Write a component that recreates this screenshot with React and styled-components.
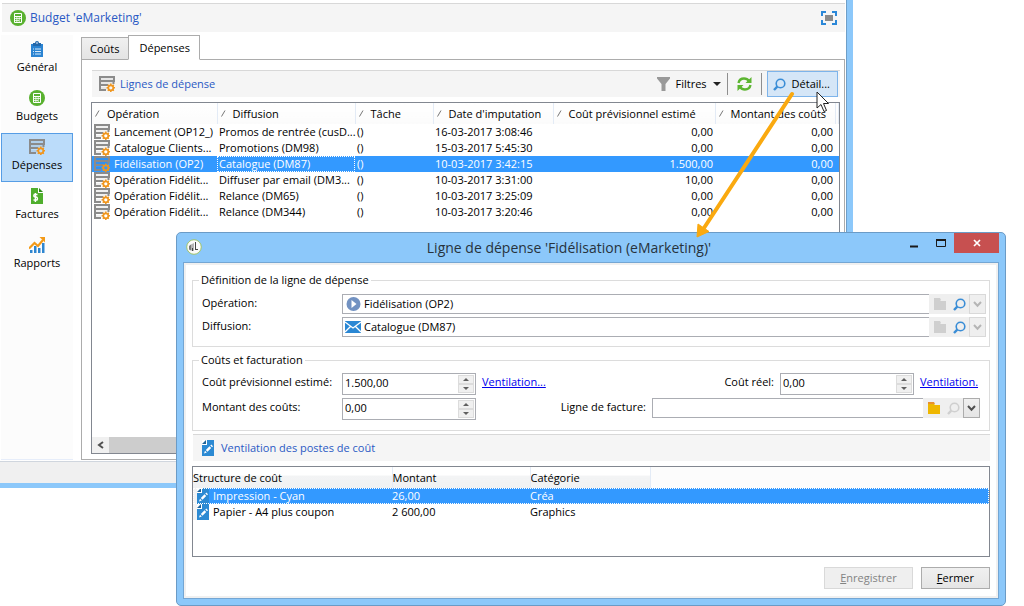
import React from 'react'
import styled, { createGlobalStyle, css } from 'styled-components'

const GlobalStyle = createGlobalStyle`
    * {
        box-sizing: border-box;
    }
    body {
        margin: 0;
        background: #fff;
        color: #000;
        font-family: 'Open Sans', 'Noto Sans', sans-serif;
        font-size: 11px;
        line-height: 16px;
    }
    button, input {
        font: inherit;
        color: inherit;
        margin: 0;
    }
    svg {
        display: block;
        flex: none;
    }
`;

const Desktop = styled.div`
    position: relative;
    min-height: 100vh;
    overflow: hidden;
`;

/* ---------- main window ---------- */

const MainWindow = styled.div`
    display: flex;
    flex-direction: column;
    height: calc(100vh - 118px);
    margin-right: 171px;
    padding-top: 3px;
    border-right: 6px solid #8cc8fa;
    border-bottom: 5px solid #8cc8fa;
    box-shadow: inset -1px 0 0 #6f9fc8, inset 0 -1px 0 #6f9fc8;
`;

const Header = styled.header`
    display: flex;
    align-items: center;
    gap: 4px;
    height: 29px;
    margin: 0 2px;
    padding: 0 8px;
    border-top: 1px solid #d8d8d8;
    background: #f5f5f5;
`;

const HeaderTitle = styled.h1`
    flex: 1;
    margin: 0;
    font-size: 12px;
    font-weight: 400;
    color: #2a59c4;
`;

const Body = styled.div`
    flex: 1;
    display: flex;
    gap: 8px;
    min-height: 0;
    margin: 3px 2px 1px 1px;
`;

const Sidebar = styled.nav`
    flex: none;
    width: 72px;
    background: #fcfcfc;
    border-bottom: 1px solid #e6edfa;
`;

const NavItem = styled.button`
    display: flex;
    flex-direction: column;
    align-items: center;
    gap: 2px;
    width: 100%;
    height: 49px;
    padding: 5px 0 0;
    border: 1px solid transparent;
    background: transparent;
    ${({ $active }) => $active && css`
        border-color: #569de5;
        background: #bbdcfa;
    `}
`;

const Content = styled.main`
    flex: 1;
    display: flex;
    flex-direction: column;
    min-width: 0;
`;

const Tabs = styled.div`
    display: flex;
    align-items: flex-end;
    height: 25px;
    margin-bottom: -1px;
`;

const Tab = styled.button`
    position: relative;
    height: 23px;
    padding: 0 9px 0 8px;
    border: 1px solid #acacac;
    border-right: 0;
    background: linear-gradient(#f0f0f0, #e4e4e4);
    ${({ $active }) => $active && css`
        height: 25px;
        padding: 0 9px 0 10px;
        border-right: 1px solid #acacac;
        border-bottom-color: #fff;
        background: #fff;
    `}
`;

const Panel = styled.section`
    flex: 1;
    display: flex;
    flex-direction: column;
    gap: 5px;
    min-height: 0;
    padding: 10px 4px 5px 9px;
    border: 1px solid #acacac;
`;

const Toolbar = styled.div`
    display: flex;
    align-items: center;
    gap: ${({ $flush }) => ($flush ? '7px' : '5px')};
    height: 27px;
    margin: ${({ $flush }) => ($flush ? '3px 0 0 1px' : '0 0 0 1px')};
    padding: ${({ $flush }) => ($flush ? '0 9px' : '0 2px 0 7px')};
    border-top: 1px solid #d8d8d8;
    background: #f5f5f5;
`;

const ToolbarTitle = styled.h2`
    flex: 1;
    margin: 0;
    font-size: 11px;
    font-weight: 400;
    color: #2a59c4;
`;

const ToolButton = styled.button`
    display: flex;
    align-items: center;
    gap: 6px;
    height: 26px;
    padding: 0 3px;
    border: 1px solid transparent;
    background: transparent;
    ${({ $drop }) => $drop && css`
        padding: 0;
    `}
    ${({ $hot }) => $hot && css`
        padding: 0 7px 0 5px;
        border-color: #7eb4ea;
        background: #d5e6f7;
    `}
`;

const Separator = styled.span`
    width: 1px;
    height: 22px;
    background: #8e8e8e;
`;

const ListBox = styled.div`
    flex: ${({ $tall }) => ($tall ? '1' : 'none')};
    display: flex;
    flex-direction: column;
    justify-content: space-between;
    height: ${({ $tall }) => ($tall ? 'auto' : '91px')};
    margin-top: ${({ $tall }) => ($tall ? '0' : '5px')};
    border: 1px solid #828790;
    overflow: hidden;
`;

const Table = styled.table`
    width: 100%;
    table-layout: fixed;
    border-collapse: collapse;
`;

const Col = styled.col`
    width: ${({ $width }) => $width};
`;

const Th = styled.th`
    height: 21px;
    padding: 0 0 0 3px;
    overflow: hidden;
    border-right: 1px solid #e3ebf6;
    background: linear-gradient(#fff, #fbfbfb);
    font-weight: 400;
    text-align: left;
    white-space: nowrap;
    svg {
        display: inline-block;
        margin-right: 7px;
        vertical-align: 1px;
    }
`;

const CostTh = styled(Th)`
    padding: 0;
    background: ${({ $empty }) => ($empty ? '#fcfcfc' : 'linear-gradient(#fff 40%, #f3f4f5 41%, #f0f1f2)')};
    border-right-color: ${({ $empty }) => ($empty ? 'transparent' : '#e3ebf6')};
`;

const Row = styled.tr`
    height: 16px;
    ${({ $selected }) => $selected && css`
        background: #3399ff;
        color: #fff;
    `}
`;

const Td = styled.td`
    height: 16px;
    padding: 0 2px;
    white-space: nowrap;
    text-align: ${({ $right }) => ($right ? 'right' : 'left')};
    outline: ${({ $focus }) => ($focus ? '1px dotted #fff' : 'none')};
    outline-offset: -1px;
`;

const IconCell = styled.div`
    display: flex;
    align-items: center;
    gap: 4px;
    height: 16px;
`;

const CostRow = styled(Row)`
    outline: ${({ $selected }) => ($selected ? '1px dotted #fff' : 'none')};
    outline-offset: -1px;
`;

const CostTd = styled(Td)`
    padding: 0;
    ${({ $first }) => $first && css`
        padding-left: 4px;
        background: linear-gradient(to right, #f3f3f3 16px, transparent 16px);
    `}
`;

const ScrollBar = styled.div`
    display: flex;
    height: 16px;
    background: #f0f0f0;
`;

const ScrollArrow = styled.button`
    display: grid;
    place-items: center;
    width: 17px;
    padding: 0;
    border: 0;
    background: #f0f0f0;
`;

const ScrollThumb = styled.div`
    width: 60%;
    background: #cdcdcd;
`;

const StatusBar = styled.footer`
    height: 22px;
    border-top: 1px solid #d0d6de;
    background: #f0f0f0;
`;

/* ---------- dialog ---------- */

const Dialog = styled.div`
    position: absolute;
    top: 232px;
    right: 18px;
    bottom: 0;
    left: 176px;
    display: flex;
    flex-direction: column;
    padding: 0 6px 6px;
    border: 1px solid #6b9bc6;
    border-radius: 5px;
    background: #8cc8fa;
`;

const TitleBar = styled.div`
    display: flex;
    height: 29px;
    padding-left: 3px;
`;

const AppIcon = styled.div`
    padding-top: 6px;
`;

const DialogTitle = styled.h2`
    flex: 1;
    margin: 0;
    padding-left: 36px;
    font-size: 14px;
    font-weight: 400;
    line-height: 30px;
    text-align: center;
    color: #27333d;
`;

const WindowButton = styled.button`
    display: grid;
    place-items: center;
    width: ${({ $close }) => ($close ? '45px' : '27px')};
    height: 20px;
    padding: 0;
    border: 0;
    background: ${({ $close }) => ($close ? '#c75050' : 'transparent')};
`;

const Client = styled.form`
    flex: 1;
    display: flex;
    flex-direction: column;
    padding: 7px 8px;
    border: 1px solid #74a6d3;
    background: #fff;
    box-shadow: inset 0 0 0 2px #f0f0f0;
`;

const Group = styled.fieldset`
    display: flex;
    flex-direction: column;
    gap: 3px;
    min-width: 0;
    margin: 2px 0 0;
    padding: ${({ $wide }) => ($wide ? '6px 3px 9px 9px' : '5px 9px 10px')};
    border: 1px solid #dcdcdc;
    & + & {
        margin-top: 5px;
    }
`;

const Legend = styled.legend`
    margin-left: -3px;
    padding: 0 2px;
`;

const FormRow = styled.div`
    display: flex;
    align-items: flex-start;
`;

const Label = styled.label`
    width: ${({ $auto }) => ($auto ? 'auto' : '140px')};
    margin-right: ${({ $auto }) => ($auto ? '6px' : '0')};
    padding-top: 1px;
`;

const Spacer = styled.div`
    flex: 1;
`;

const LinkField = styled.div`
    flex: ${({ $short }) => ($short ? 'none' : '1')};
    display: flex;
    width: ${({ $short }) => ($short ? '328px' : 'auto')};
    height: 20px;
`;

const FieldBox = styled.div`
    flex: 1;
    display: flex;
    align-items: center;
    gap: 3px;
    min-width: 0;
    padding-left: 2px;
    border: 1px solid #abadb3;
    border-right: 0;
`;

const TextInput = styled.input`
    flex: 1;
    min-width: 0;
    height: 16px;
    padding: 0;
    border: 0;
    outline: 0;
    background: transparent;
`;

const FieldButton = styled.button`
    display: grid;
    place-items: center;
    width: ${({ $arrow }) => ($arrow ? '17px' : '20px')};
    padding: 0;
    border: ${({ $arrow }) => ($arrow ? '1px solid #d9d9d9' : '0')};
    background: #efefef;
    ${({ $enabled }) => $enabled && css`
        border-color: #acacac;
        background: linear-gradient(#f0f0f0, #e5e5e5);
    `}
`;

const Spin = styled.div`
    display: flex;
    width: 134px;
    height: 22px;
    padding: 1px 1px 1px 2px;
    border: 1px solid #abadb3;
`;

const SpinButtons = styled.div`
    display: flex;
    flex-direction: column;
    width: 16px;
`;

const SpinButton = styled.button`
    flex: 1;
    display: grid;
    place-items: center;
    padding: 0;
    border: 1px solid #dcdcdc;
    background: #f0f0f0;
`;

const Link = styled.a`
    min-width: 60px;
    margin-left: 6px;
    padding-top: 1px;
    color: #0000ee;
    text-decoration: underline;
`;

const Actions = styled.div`
    display: flex;
    justify-content: flex-end;
    gap: 8px;
    margin-top: 10px;
`;

const ActionButton = styled.button`
    min-width: 69px;
    height: 22px;
    padding: 0 15px;
    border: 1px solid #acacac;
    background: linear-gradient(#f0f0f0, #e5e5e5);
    &:disabled {
        border-color: #d9d9d9;
        background: #efefef;
        color: #838383;
    }
`;

const Pointer = styled.svg`
    position: absolute;
    top: 86px;
    right: 190px;
    pointer-events: none;
`;

/* ---------- icons ---------- */

const CalcIcon = () => (
    <svg width="16" height="16" viewBox="0 0 16 16">
        <circle cx="8" cy="8" r="8" fill="#59b12f" />
        <rect x="4" y="3" width="8" height="10" rx="1" fill="#fff" />
        <path d="M5 4h6v2H5zM5 7h1.5v1.300H5zM7.300 7h1.500v1.300H7.300zM9.500 7H11v1.300H9.500zM5 9h1.500v1.300H5zM7.300 9h1.500v1.300H7.300zM9.500 9H11v3H9.500zM5 11h1.500v1H5zM7.300 11h1.500v1H7.300z" fill="#59b12f" />
    </svg>
);

const ClipboardIcon = () => (
    <svg width="16" height="16" viewBox="0 0 16 16">
        <path d="M2 3h12v13H2z" fill="#2b84d2" />
        <path d="M4 2h2a2 2 0 0 1 4 0h2v3H4z" fill="#2368aa" />
        <circle cx="8" cy="2" r=".8" fill="#fff" />
        <path d="M4 8h1M6 8h6M4 10.500h1M6 10.500h6M4 13h1M6 13h6" stroke="#d6eafb" />
    </svg>
);

const ExpenseIcon = () => (
    <svg width="16" height="16" viewBox="0 0 16 16">
        <path d="M2 2h12v6.500H2zM2 11h6v2.500H2z" fill="#000" fillOpacity=".06" />
        <path d="M1 1h14v4H1zM1 5v9h6M1 9h8M14.500 5v3" fill="none" stroke="#8b8b8b" strokeWidth="2" />
        <g fill="none" stroke="#f0961e">
            <path d="M11.800 7.500v2M11.800 14v2M7.600 11.800h2M14 11.800h2M8.800 8.800l1.400 1.400M13.400 13.400l1.400 1.400M14.800 8.800l-1.400 1.400M10.200 13.400l-1.400 1.400" strokeWidth="1.500" />
            <circle cx="11.800" cy="11.800" r="2.500" strokeWidth="1.700" />
        </g>
    </svg>
);

const InvoiceIcon = () => (
    <svg width="16" height="16" viewBox="0 0 16 16">
        <path d="M2 0h7v5h5v11H2z" fill="#4fae2d" />
        <path d="M10 0l4 4h-4z" fill="#2f8a1a" />
        <path d="M8.500 6.500H5.200Q4 8.500 6.200 9h.8q2.300.7 1 3H4.500M6.400 5v9" fill="none" stroke="#fff" strokeWidth="1.400" />
    </svg>
);

const ReportIcon = () => (
    <svg width="16" height="16" viewBox="0 0 16 16">
        <path d="M1 13h2.500v3H1zM5 9h2.500v7H5zM9 11h2.500v5H9zM13 6h2.500v10H13z" fill="#2f86d0" />
        <path d="M0 11.500l5.500-5.500 3.500 3 5-6" fill="none" stroke="#f39a18" strokeWidth="2.200" />
        <path d="M10.500 0H16v5.500z" fill="#f39a18" />
    </svg>
);

const FullscreenIcon = () => (
    <svg width="16" height="14" viewBox="0 0 16 14">
        <path d="M1 5V1h4M11 1h4v4M15 9v4h-4M5 13H1V9" fill="none" stroke="#2b88d8" strokeWidth="2" />
        <path d="M4 4h8v6H4z" fill="#8a8a8a" />
    </svg>
);

const FilterIcon = () => (
    <svg width="13" height="14" viewBox="0 0 13 14">
        <path d="M0 0h13v1.500L8.500 7v7h-4V7L0 1.500z" fill="#999" />
    </svg>
);

const RefreshIcon = () => (
    <svg width="15" height="14" viewBox="0 0 15 14">
        <path d="M1.500 6q1-4.500 5.500-4.500 3.300 0 5 2.500M13.500 8q-1 4.500-5.500 4.500-3.300 0-5-2.500" fill="none" stroke="#5cb531" strokeWidth="2.400" />
        <path d="M14.500 0v6H8.500zM.5 14V8h6z" fill="#5cb531" />
    </svg>
);

const SearchIcon = ({ color = '#3a8dd6' }) => (
    <svg width="13" height="13" viewBox="0 0 13 13">
        <circle cx="7.500" cy="5.500" r="4.300" fill="none" stroke={color} strokeWidth="1.600" />
        <path d="M4.300 8.700L1 12" stroke={color} strokeWidth="2.400" />
    </svg>
);

const FolderIcon = ({ color = '#cfcfcf', tab = '#cfcfcf' }) => (
    <svg width="13" height="12" viewBox="0 0 13 12">
        <path d="M1 0h6l1 2H1z" fill={tab} />
        <path d="M1 2h6l1 1h5v9H1z" fill={color} />
    </svg>
);

const ChevronIcon = ({ color = '#b5b5b5' }) => (
    <svg width="9" height="7" viewBox="0 0 9 7">
        <path d="M1 1l3.500 3.700L8 1" fill="none" stroke={color} strokeWidth="2" />
    </svg>
);

const Triangle = ({ up }) => (
    <svg width="6" height="3" viewBox="0 0 6 3">
        <path d={up ? 'M0 3l3-3 3 3z' : 'M0 0h6L3 3z'} fill="#606060" />
    </svg>
);

const CaretIcon = () => (
    <svg width="8" height="4" viewBox="0 0 8 4">
        <path d="M0 0h8L4 4z" fill="#222" />
    </svg>
);

const SortMark = () => (
    <svg width="5" height="7" viewBox="0 0 5 7">
        <path d="M.5 6.500l3.500-6" stroke="#777" />
    </svg>
);

const EditDocIcon = () => (
    <svg width="12" height="16" viewBox="0 0 12 16">
        <path d="M0 0h12v16H0z" fill="#2c8ad3" />
        <path d="M0 0h5v5H0z" fill="#fff" />
        <path d="M0 4l4-4v4z" fill="#1f6499" />
        <path d="M2 13.500l1-2.700 1.800 1.800zM3.800 10L7.500 6.300 9.200 8 5.500 11.700zM8.300 5.500l1-1 1.700 1.700-1 1z" fill="#fff" />
    </svg>
);

const PlayIcon = () => (
    <svg width="16" height="16" viewBox="0 0 16 16">
        <circle cx="8.500" cy="8" r="7" fill="#7292c2" />
        <path d="M6.500 4v8l5-4z" fill="#fff" />
    </svg>
);

const MailIcon = () => (
    <svg width="16" height="12" viewBox="0 0 16 12">
        <path d="M0 0h16v12H0z" fill="#2a87d4" />
        <path d="M0 1l8 6 8-6M0 11l5.500-5.500M16 11l-5.500-5.500" fill="none" stroke="#fff" strokeWidth="1.300" />
    </svg>
);

const NeolaneIcon = () => (
    <svg width="16" height="16" viewBox="0 0 16 16">
        <circle cx="8" cy="8" r="7.300" fill="#fafafa" stroke="#9fc46a" />
        <path d="M3 7l2-1.500v6L3 10.500z" fill="#777" />
        <path d="M5 5.500L8 4v8l-3-.5z" fill="#b5b5b5" />
        <path d="M9.500 3v8M9.500 10.500h2.500M6.500 9v3" stroke="#444" />
    </svg>
);

/* ---------- data ---------- */

const navItems = [
    { label: 'Général', icon: <ClipboardIcon /> },
    { label: 'Budgets', icon: <CalcIcon /> },
    { label: 'Dépenses', icon: <ExpenseIcon />, active: true },
    { label: 'Factures', icon: <InvoiceIcon /> },
    { label: 'Rapports', icon: <ReportIcon /> },
];

const expenseColumns = [
    { label: 'Opération', width: '125px' },
    { label: 'Diffusion', width: '138px' },
    { label: 'Tâche', width: '78px' },
    { label: "Date d'imputation", width: '120px' },
    { label: 'Coût prévisionnel estimé', width: '162px' },
    { label: 'Montant des coûts', width: '120px' },
    { label: '', width: 'auto' },
];

const expenses = [
    ['Lancement (OP12_)', 'Promos de rentrée (cusD...', '16-03-2017 3:08:46', '0,00', '0,00'],
    ['Catalogue Clients...', 'Promotions (DM98)', '15-03-2017 5:45:30', '0,00', '0,00'],
    ['Fidélisation (OP2)', 'Catalogue (DM87)', '10-03-2017 3:42:15', '1.500,00', '0,00'],
    ['Opération Fidélit...', 'Diffuser par email (DM3...', '10-03-2017 3:31:00', '10,00', '0,00'],
    ['Opération Fidélit...', 'Relance (DM65)', '10-03-2017 3:25:09', '0,00', '0,00'],
    ['Opération Fidélit...', 'Relance (DM344)', '10-03-2017 3:20:46', '0,00', '0,00'],
];

const costs = [
    ['Impression - Cyan', '26,00', 'Créa'],
    ['Papier - A4 plus coupon', '2 600,00', 'Graphics'],
];

/* ---------- parts ---------- */

const ObjectField = ({ id, icon, value, short }) => (
    <LinkField $short={short}>
        <FieldBox>
            {icon}
            <TextInput id={id} defaultValue={value} />
        </FieldBox>
        <FieldButton type="button" aria-label="Ouvrir">
            {short ? <FolderIcon color="#efb700" tab="#e8912d" /> : <FolderIcon />}
        </FieldButton>
        <FieldButton type="button" aria-label="Rechercher">
            <SearchIcon color={short ? '#cfcfcf' : '#3a8dd6'} />
        </FieldButton>
        <FieldButton type="button" aria-label="Choisir" $arrow $enabled={short}>
            <ChevronIcon color={short ? '#505050' : '#b5b5b5'} />
        </FieldButton>
    </LinkField>
);

const SpinField = ({ id, value }) => (
    <Spin>
        <TextInput id={id} defaultValue={value} />
        <SpinButtons>
            <SpinButton type="button" aria-label="Augmenter"><Triangle up /></SpinButton>
            <SpinButton type="button" aria-label="Diminuer"><Triangle /></SpinButton>
        </SpinButtons>
    </Spin>
);

const ExpenseTable = () => (
    <Table>
        <colgroup>
            {expenseColumns.map((c, i) => <Col key={i} $width={c.width} />)}
        </colgroup>
        <thead>
            <tr>
                {expenseColumns.map((c, i) => <Th key={i}><SortMark />{c.label}</Th>)}
            </tr>
        </thead>
        <tbody>
            {expenses.map(([operation, diffusion, date, planned, amount], i) => (
                <Row key={i} $selected={i === 2}>
                    <Td>
                        <IconCell>
                            <ExpenseIcon />
                            {operation}
                        </IconCell>
                    </Td>
                    <Td $focus={i === 2}>{diffusion}</Td>
                    <Td>()</Td>
                    <Td>{date}</Td>
                    <Td $right>{planned}</Td>
                    <Td $right>{amount}</Td>
                    <Td />
                </Row>
            ))}
        </tbody>
    </Table>
);

const CostTable = () => (
    <Table>
        <colgroup>
            <Col $width="199px" />
            <Col $width="138px" />
            <Col $width="120px" />
            <Col $width="auto" />
        </colgroup>
        <thead>
            <tr>
                <CostTh>Structure de coût</CostTh>
                <CostTh>Montant</CostTh>
                <CostTh>Catégorie</CostTh>
                <CostTh $empty />
            </tr>
        </thead>
        <tbody>
            {costs.map(([name, amount, category], i) => (
                <CostRow key={name} $selected={i === 0}>
                    <CostTd $first>
                        <IconCell>
                            <EditDocIcon />
                            {name}
                        </IconCell>
                    </CostTd>
                    <CostTd>{amount}</CostTd>
                    <CostTd>{category}</CostTd>
                    <CostTd />
                </CostRow>
            ))}
        </tbody>
    </Table>
);

const BudgetWindow = () => (
    <MainWindow>
        <Header>
            <CalcIcon />
            <HeaderTitle>Budget 'eMarketing'</HeaderTitle>
            <FullscreenIcon />
        </Header>
        <Body>
            <Sidebar>
                {navItems.map((item) => (
                    <NavItem key={item.label} type="button" $active={item.active}>
                        {item.icon}
                        {item.label}
                    </NavItem>
                ))}
            </Sidebar>
            <Content>
                <Tabs>
                    <Tab type="button">Coûts</Tab>
                    <Tab type="button" $active>Dépenses</Tab>
                </Tabs>
                <Panel>
                    <Toolbar>
                        <ExpenseIcon />
                        <ToolbarTitle>Lignes de dépense</ToolbarTitle>
                        <ToolButton type="button" $drop><FilterIcon />Filtres<CaretIcon /></ToolButton>
                        <Separator />
                        <ToolButton type="button" aria-label="Actualiser"><RefreshIcon /></ToolButton>
                        <Separator />
                        <ToolButton type="button" $hot><SearchIcon />Détail...</ToolButton>
                    </Toolbar>
                    <ListBox $tall>
                        <ExpenseTable />
                        <ScrollBar>
                            <ScrollArrow type="button" aria-label="Défiler à gauche">
                                <svg width="7" height="8" viewBox="0 0 7 8">
                                    <path d="M6 1L2 4l4 3" fill="none" stroke="#505050" strokeWidth="2" />
                                </svg>
                            </ScrollArrow>
                            <ScrollThumb />
                        </ScrollBar>
                    </ListBox>
                </Panel>
            </Content>
        </Body>
        <StatusBar />
    </MainWindow>
);

const ExpenseDialog = () => (
    <Dialog role="dialog" aria-labelledby="dialog-title">
        <TitleBar>
            <AppIcon><NeolaneIcon /></AppIcon>
            <DialogTitle id="dialog-title">Ligne de dépense 'Fidélisation (eMarketing)'</DialogTitle>
            <WindowButton type="button" aria-label="Réduire">
                <svg width="8" height="10" viewBox="0 0 8 10"><path d="M0 8.500h8" stroke="#1a1a1a" strokeWidth="2" /></svg>
            </WindowButton>
            <WindowButton type="button" aria-label="Agrandir">
                <svg width="10" height="8" viewBox="0 0 10 8"><path d="M.5 1h9M.5 0v7.500h9V0" fill="none" stroke="#1a1a1a" /><path d="M0 1h10" stroke="#1a1a1a" strokeWidth="2" /></svg>
            </WindowButton>
            <WindowButton type="button" aria-label="Fermer la fenêtre" $close>
                <svg width="8" height="8" viewBox="0 0 8 8"><path d="M1 1l6 6M7 1L1 7" stroke="#fff" strokeWidth="1.700" /></svg>
            </WindowButton>
        </TitleBar>
        <Client onSubmit={(e) => e.preventDefault()}>
            <Group $wide>
                <Legend>Définition de la ligne de dépense</Legend>
                <FormRow>
                    <Label htmlFor="operation">Opération:</Label>
                    <ObjectField id="operation" icon={<PlayIcon />} value="Fidélisation (OP2)" />
                </FormRow>
                <FormRow>
                    <Label htmlFor="diffusion">Diffusion:</Label>
                    <ObjectField id="diffusion" icon={<MailIcon />} value="Catalogue (DM87)" />
                </FormRow>
            </Group>
            <Group>
                <Legend>Coûts et facturation</Legend>
                <FormRow>
                    <Label htmlFor="planned">Coût prévisionnel estimé:</Label>
                    <SpinField id="planned" value="1.500,00" />
                    <Link href="#ventilation">Ventilation...</Link>
                    <Spacer />
                    <Label htmlFor="actual" $auto>Coût réel:</Label>
                    <SpinField id="actual" value="0,00" />
                    <Link href="#ventilation">Ventilation.</Link>
                </FormRow>
                <FormRow>
                    <Label htmlFor="amount">Montant des coûts:</Label>
                    <SpinField id="amount" value="0,00" />
                    <Spacer />
                    <Label htmlFor="invoice" $auto>Ligne de facture:</Label>
                    <ObjectField id="invoice" value="" short />
                </FormRow>
            </Group>
            <Toolbar $flush>
                <EditDocIcon />
                <ToolbarTitle>Ventilation des postes de coût</ToolbarTitle>
            </Toolbar>
            <ListBox>
                <CostTable />
            </ListBox>
            <Actions>
                <ActionButton type="submit" disabled><u>E</u>nregistrer</ActionButton>
                <ActionButton type="button"><u>F</u>ermer</ActionButton>
            </Actions>
        </Client>
    </Dialog>
);

const App = () => {
    return (
        <>
            <GlobalStyle />
            <Desktop>
                <BudgetWindow />
                <ExpenseDialog />
                <Pointer width="144" height="156" viewBox="0 0 144 156">
                    <path d="M102 8L14 142" stroke="#faa90f" strokeWidth="4" strokeLinecap="round" />
                    <path d="M7 151l1-13 11 7.500z" fill="#faa90f" stroke="#faa90f" />
                    <path d="M127 6v16l4-3.500 3 7 2.500-1-3-7h5z" fill="#fff" stroke="#222" />
                </Pointer>
            </Desktop>
        </>
    )
}

export default App
